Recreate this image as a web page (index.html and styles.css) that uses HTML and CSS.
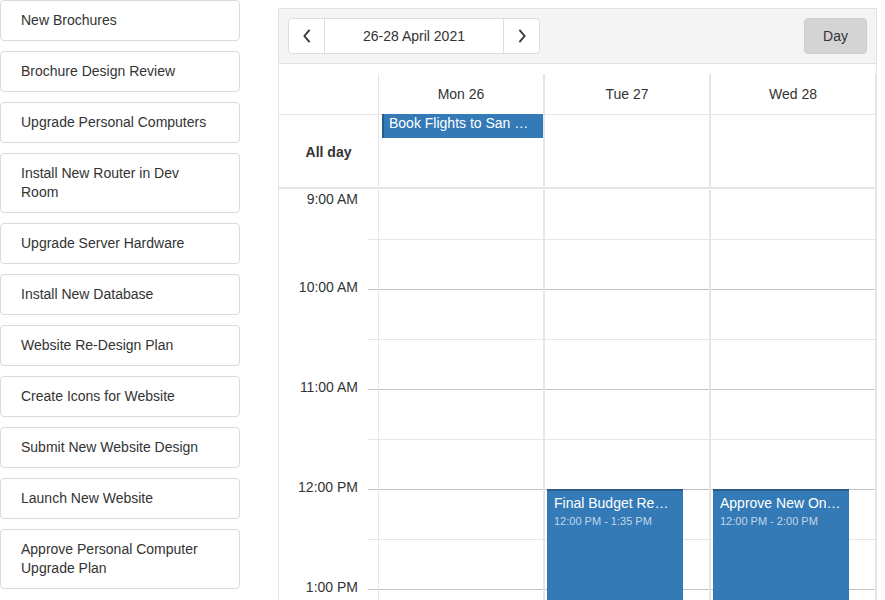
FILE: index.html
```html
<!DOCTYPE html>
<html lang="en">
<head>
<meta charset="utf-8">
<title>Scheduler</title>
<link rel="stylesheet" href="styles.css">
</head>
<body>
<div class="page">
  <ul class="tasks">
    <li class="task">New Brochures</li>
    <li class="task">Brochure Design Review</li>
    <li class="task">Upgrade Personal Computers</li>
    <li class="task">Install New Router in Dev Room</li>
    <li class="task">Upgrade Server Hardware</li>
    <li class="task">Install New Database</li>
    <li class="task">Website Re-Design Plan</li>
    <li class="task">Create Icons for Website</li>
    <li class="task">Submit New Website Design</li>
    <li class="task">Launch New Website</li>
    <li class="task">Approve Personal Computer Upgrade Plan</li>
  </ul>

  <div class="scheduler">
    <div class="toolbar">
      <div class="nav">
        <button class="nav-btn" type="button" aria-label="Previous">
          <svg width="10" height="16" viewBox="0 0 10 16"><path d="M7.6 1.8 L2.4 8 L7.6 14.2" fill="none" stroke="#333" stroke-width="1.8"/></svg>
        </button>
        <div class="nav-date">26-28 April 2021</div>
        <button class="nav-btn" type="button" aria-label="Next">
          <svg width="10" height="16" viewBox="0 0 10 16"><path d="M2.4 1.8 L7.6 8 L2.4 14.2" fill="none" stroke="#333" stroke-width="1.8"/></svg>
        </button>
      </div>
      <button class="view-btn" type="button">Day</button>
    </div>

    <div class="row head">
      <div class="head-cell"></div>
      <div class="head-cell day-line">Mon 26</div>
      <div class="head-cell day-line">Tue 27</div>
      <div class="head-cell day-line">Wed 28</div>
    </div>

    <div class="row allday">
      <div class="allday-label">All day</div>
      <div class="allday-cell day-line">
        <div class="allday-event">Book Flights to San Francisco for Sales Trip</div>
      </div>
      <div class="allday-cell day-line"></div>
      <div class="allday-cell day-line"></div>
    </div>

    <div class="row grid">
      <div class="times">
        <div class="hour"><div class="hour-label">9:00 AM</div></div>
        <div class="hour"><div class="hour-label">10:00 AM</div></div>
        <div class="hour"><div class="hour-label">11:00 AM</div></div>
        <div class="hour"><div class="hour-label">12:00 PM</div></div>
        <div class="hour"><div class="hour-label">1:00 PM</div></div>
        <div class="hour"><div class="hour-label">2:00 PM</div></div>
      </div>
      <div class="day day-line">
        <div class="slot"></div><div class="slot"></div><div class="slot"></div><div class="slot"></div>
        <div class="slot"></div><div class="slot"></div><div class="slot"></div><div class="slot"></div>
        <div class="slot"></div><div class="slot"></div><div class="slot"></div><div class="slot"></div>
      </div>
      <div class="day day-line">
        <div class="slot"></div><div class="slot"></div><div class="slot"></div><div class="slot"></div>
        <div class="slot"></div><div class="slot"></div><div class="slot"></div><div class="slot"></div>
        <div class="slot"></div><div class="slot"></div><div class="slot"></div><div class="slot"></div>
        <div class="event" style="top: 299px; height: 158px;">
          <div class="event-title">Final Budget Review</div>
          <div class="event-time">12:00 PM - 1:35 PM</div>
        </div>
      </div>
      <div class="day day-line">
        <div class="slot"></div><div class="slot"></div><div class="slot"></div><div class="slot"></div>
        <div class="slot"></div><div class="slot"></div><div class="slot"></div><div class="slot"></div>
        <div class="slot"></div><div class="slot"></div><div class="slot"></div><div class="slot"></div>
        <div class="event" style="top: 299px; height: 200px;">
          <div class="event-title">Approve New Online Marketing Strategy</div>
          <div class="event-time">12:00 PM - 2:00 PM</div>
        </div>
      </div>
    </div>
  </div>
</div>
</body>
</html>
```

FILE: styles.css
```css
* {
  box-sizing: border-box;
}

html, body {
  margin: 0;
  padding: 0;
}

body {
  font-family: "Liberation Sans", Arial, sans-serif;
  font-size: 14px;
  color: #333;
  background: #fff;
}

.page {
  display: flex;
  align-items: flex-start;
  height: 600px;
  overflow: hidden;
}

/* Task list */
.tasks {
  list-style: none;
  margin: 0;
  padding: 0;
  width: 240px;
  flex: none;
  display: flex;
  flex-direction: column;
  gap: 10px;
}

.task {
  border: 1px solid #dadada;
  border-radius: 4px;
  padding: 10px 20px;
  line-height: 19px;
  background: #fff;
}

/* Scheduler */
.scheduler {
  flex: none;
  width: 599px;
  margin-left: 38px;
  margin-top: 8px;
  border: 1px solid #e3e3e3;
  border-bottom: none;
  background: #fff;
}

.toolbar {
  display: flex;
  justify-content: space-between;
  align-items: center;
  padding: 9px 9px;
  background: #f4f4f4;
  border-bottom: 1px solid #e3e3e3;
}

.nav {
  display: flex;
  height: 36px;
  border: 1px solid #dedede;
  border-radius: 4px;
  background: #fff;
}

.nav-btn {
  width: 35px;
  margin: 0;
  padding: 0;
  border: none;
  background: transparent;
  display: flex;
  align-items: center;
  justify-content: center;
}

.nav-date {
  width: 180px;
  border-left: 1px solid #dedede;
  border-right: 1px solid #dedede;
  display: flex;
  align-items: center;
  justify-content: center;
  font-size: 14px;
}

.view-btn {
  width: 63px;
  height: 36px;
  margin: 0;
  border: 1px solid #cfcfcf;
  border-radius: 4px;
  background: #d4d4d4;
  font-family: "Liberation Sans", Arial, sans-serif;
  font-size: 14px;
  color: #333;
  padding: 0;
}

.row {
  display: grid;
  grid-template-columns: 99px repeat(3, 1fr);
}

.day-line {
  border-left: 1px solid #e6e6e6;
  border-right: 1px solid #e6e6e6;
}

.head {
  border-bottom: 1px solid #e6e6e6;
}

.head-cell {
  margin-top: 10px;
  height: 40px;
  line-height: 40px;
  text-align: center;
}

.allday {
  height: 74px;
  border-bottom: 2px solid #e6e6e6;
}

.allday-label {
  display: flex;
  align-items: center;
  justify-content: center;
  padding-top: 2px;
  font-weight: bold;
}

.allday-cell {
  padding: 0 0 0 3px;
  min-width: 0;
}

.allday-event {
  margin-top: -1px;
  height: 24px;
  line-height: 18px;
  padding: 0 10px 0 5px;
  background: #337ab7;
  border-left: 2px solid #285e8e;
  color: #fff;
  white-space: nowrap;
  overflow: hidden;
  text-overflow: ellipsis;
}

.grid {
  padding-top: 1px;
}

.times {
  display: flex;
  flex-direction: column;
}

.hour {
  height: 100px;
  flex: none;
  display: flex;
  flex-direction: column;
  background:
    linear-gradient(#e6e6e6, #e6e6e6) right 0 top 49px / 10px 1px no-repeat,
    linear-gradient(#c4c4c4, #c4c4c4) right 0 bottom 0 / 10px 1px no-repeat;
}

.hour-label {
  margin-top: -13px;
  line-height: 20px;
  text-align: right;
  padding-right: 20px;
  white-space: nowrap;
}

.hour:first-child .hour-label {
  margin-top: -1px;
}

.day {
  position: relative;
  min-width: 0;
}

.slot {
  height: 50px;
  border-bottom: 1px solid #e6e6e6;
}

.slot:nth-child(even) {
  border-bottom-color: #c4c4c4;
}

.event {
  position: absolute;
  left: 2px;
  width: 136px;
  padding: 3px 8px 0 7px;
  background: #337ab7;
  border-top: 2px solid #2a5d8b;
  color: #fff;
  overflow: hidden;
}

.event-title {
  font-size: 14px;
  line-height: 18px;
  white-space: nowrap;
  overflow: hidden;
  text-overflow: ellipsis;
}

.event-time {
  margin-top: 2px;
  font-size: 11px;
  line-height: 14px;
  color: #c2d7e9;
  white-space: nowrap;
}
```
